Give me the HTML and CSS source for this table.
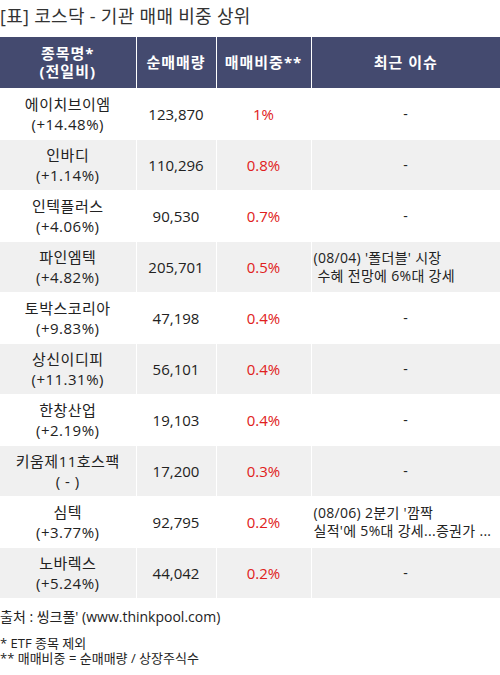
FILE: index.html
```html
<!DOCTYPE html>
<html lang="ko">

<head>
    <meta charset="UTF-8">
    <meta name="viewport" content="width=device-width, initial-scale=1.0">
    <title>코스닥 기관 매매 비중 상위</title>
    <link rel="stylesheet" href="styles.css">
</head>

<body>
    <div class="title">[표] 코스닥 - 기관 매매 비중 상위</div>
    <table class="rank">
        <thead>
            <tr>
                <th class="col-name">종목명*<br>(전일비)</th>
                <th class="col-qty">순매매량</th>
                <th class="col-ratio">매매비중**</th>
                <th class="col-issue">최근 이슈</th>
            </tr>
        </thead>
        <tbody>
            <tr>
                <td class="name">에이치브이엠<br>(+14.48%)</td>
                <td>123,870</td>
                <td class="ratio">1%</td>
                <td class="issue none">-</td>
            </tr>
            <tr>
                <td class="name">인바디<br>(+1.14%)</td>
                <td>110,296</td>
                <td class="ratio">0.8%</td>
                <td class="issue none">-</td>
            </tr>
            <tr>
                <td class="name">인텍플러스<br>(+4.06%)</td>
                <td>90,530</td>
                <td class="ratio">0.7%</td>
                <td class="issue none">-</td>
            </tr>
            <tr>
                <td class="name">파인엠텍<br>(+4.82%)</td>
                <td>205,701</td>
                <td class="ratio">0.5%</td>
                <td class="issue">(08/04) '폴더블' 시장<br>&nbsp;수혜 전망에 6%대 강세</td>
            </tr>
            <tr>
                <td class="name">토박스코리아<br>(+9.83%)</td>
                <td>47,198</td>
                <td class="ratio">0.4%</td>
                <td class="issue none">-</td>
            </tr>
            <tr>
                <td class="name">상신이디피<br>(+11.31%)</td>
                <td>56,101</td>
                <td class="ratio">0.4%</td>
                <td class="issue none">-</td>
            </tr>
            <tr>
                <td class="name">한창산업<br>(+2.19%)</td>
                <td>19,103</td>
                <td class="ratio">0.4%</td>
                <td class="issue none">-</td>
            </tr>
            <tr>
                <td class="name">키움제11호스팩<br>( - )</td>
                <td>17,200</td>
                <td class="ratio">0.3%</td>
                <td class="issue none">-</td>
            </tr>
            <tr>
                <td class="name">심텍<br>(+3.77%)</td>
                <td>92,795</td>
                <td class="ratio">0.2%</td>
                <td class="issue">(08/06) 2분기 '깜짝<br>실적'에 5%대 강세...증권가 ...</td>
            </tr>
            <tr>
                <td class="name">노바렉스<br>(+5.24%)</td>
                <td>44,042</td>
                <td class="ratio">0.2%</td>
                <td class="issue none">-</td>
            </tr>
        </tbody>
    </table>
    <div class="source">출처 : 씽크풀' (www.thinkpool.com)</div>
    <div class="notes">
        <div>* ETF 종목 제외</div>
        <div>** 매매비중 = 순매매량 / 상장주식수</div>
    </div>
</body>

</html>
```

FILE: styles.css
```css
* {
    margin: 0;
    padding: 0;
    box-sizing: border-box;
}

body {
    width: 500px;
    background-color: #fff;
    color: #222;
    font-family: "Open Sans", "Noto Sans CJK KR", sans-serif;
}

.title {
    height: 37px;
    padding-top: 4px;
    font-size: 18px;
    line-height: 24px;
    letter-spacing: 0.3px;
    color: #333;
}

.rank {
    width: 500px;
    border-collapse: collapse;
    table-layout: fixed;
}

.rank th,
.rank td {
    border: 1px solid #fff;
    text-align: center;
    vertical-align: middle;
}

.rank th {
    height: 51px;
    background-color: #444a6f;
    color: #fff;
    font-size: 15px;
    font-weight: bold;
    line-height: 18px;
    letter-spacing: 1px;
}

.rank tr:first-child th {
    border-top: none;
}

.rank th:first-child,
.rank td:first-child {
    border-left: none;
}

.rank th:last-child,
.rank td:last-child {
    border-right: none;
}

.col-name {
    width: 136px;
}

.col-qty {
    width: 80px;
}

.col-ratio {
    width: 95px;
}

.rank td {
    height: 51px;
    font-size: 15px;
    line-height: 20px;
}

.rank td.name {
    letter-spacing: 0.5px;
}

.rank tbody tr:nth-child(even) td {
    background-color: #f0f0f0;
}

.rank td.ratio {
    color: #e02020;
}

.rank td.issue {
    text-align: left;
    padding-left: 2px;
    font-size: 14px;
    line-height: 18px;
    letter-spacing: 0.3px;
    white-space: nowrap;
    overflow: hidden;
}

.rank td.issue.none {
    text-align: center;
    padding-left: 0;
}

.source {
    margin-top: 9px;
    font-size: 14px;
    line-height: 18px;
}

.notes {
    margin-top: 10px;
    font-size: 13px;
    line-height: 15px;
}
```
